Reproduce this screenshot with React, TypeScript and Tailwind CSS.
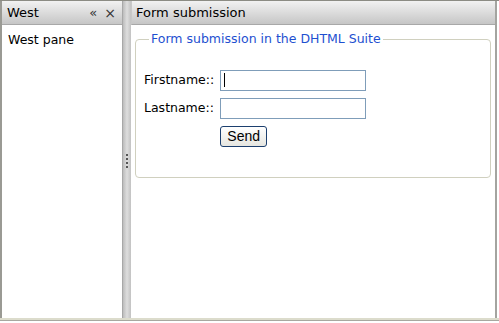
import React from "react";

export default function App() {
  const font = { fontFamily: '"DejaVu Sans", Verdana, sans-serif' };
  return (
    <div className="w-[499px] h-[323px] bg-white flex flex-col overflow-hidden" style={font}>
      <div className="flex flex-1 min-h-0 border-t border-[#8c8c84]">
        {/* West pane */}
        <div className="w-[122px] flex flex-col border-l-2 border-[#9a9a94]">
          <div className="h-[24px] flex items-center justify-between pl-[5px] pr-[6px] bg-gradient-to-b from-[#f2f2f2] to-[#c6c6c6] border-b border-[#a8a8a8] text-[13px] text-black">
            <span>West</span>
            <div className="flex items-center gap-[7px] text-[#333]">
              <span className="text-[13px] leading-none">«</span>
              <span className="text-[14px] leading-none">×</span>
            </div>
          </div>
          <div className="flex-1 bg-white pl-[6px] pt-[6px] text-[12.5px] text-black">West pane</div>
        </div>
        {/* Splitter */}
        <div className="w-[9px] flex items-center justify-center bg-gradient-to-r from-[#bcbcbc] via-[#dedede] to-[#c2c2c2] border-l border-[#a8a8a8]">
          <div className="flex flex-col gap-[2px] mt-[2px]">
            <div className="w-[2px] h-[2px] bg-[#555]" />
            <div className="w-[2px] h-[2px] bg-[#555]" />
            <div className="w-[2px] h-[2px] bg-[#555]" />
            <div className="w-[2px] h-[2px] bg-[#555]" />
          </div>
        </div>
        {/* Center pane */}
        <div className="flex-1 flex flex-col border-r-2 border-[#a4a4a0] mr-[2px]">
          <div className="h-[24px] flex items-center pl-[4px] bg-gradient-to-b from-[#f2f2f2] to-[#c6c6c6] border-b border-[#a8a8a8] border-l border-l-[#c8c8c8] text-[13px] text-black">
            Form submission
          </div>
          <div className="flex-1 bg-white pl-[4px] pr-[4px] pt-[5px]">
            <fieldset className="border border-[#d0d0bf] rounded-[4px] h-[148px] pl-[8px] pt-[21px]">
              <legend className="ml-[5px] px-[2px] text-[12.5px] text-[#1e4fd0]">Form submission in the DHTML Suite</legend>
              <div className="grid grid-cols-[auto_auto] justify-start items-center gap-y-[7px] gap-x-[6px] text-[12.5px] text-black">
                <span>Firstname::</span>
                <div className="w-[146px] h-[21px] border border-[#7f9db9] bg-white flex items-center pl-[3px]">
                  <div className="w-[1px] h-[14px] bg-black" />
                </div>
                <span>Lastname::</span>
                <div className="w-[146px] h-[21px] border border-[#7f9db9] bg-white" />
                <span />
                <button
                  className="w-[47px] h-[21px] border border-[#1c3f6e] rounded-[3px] bg-gradient-to-b from-[#ffffff] to-[#e6e6e0] text-[14px] text-black leading-none"
                  style={{ fontFamily: '"Liberation Sans", Arial, sans-serif' }}
                >
                  Send
                </button>
              </div>
            </fieldset>
          </div>
        </div>
      </div>
      <div className="h-[5px] border-t-2 border-[#dcdccc] bg-white">
        <div className="h-[1px] bg-[#a8a8a0]" />
      </div>
    </div>
  );
}
